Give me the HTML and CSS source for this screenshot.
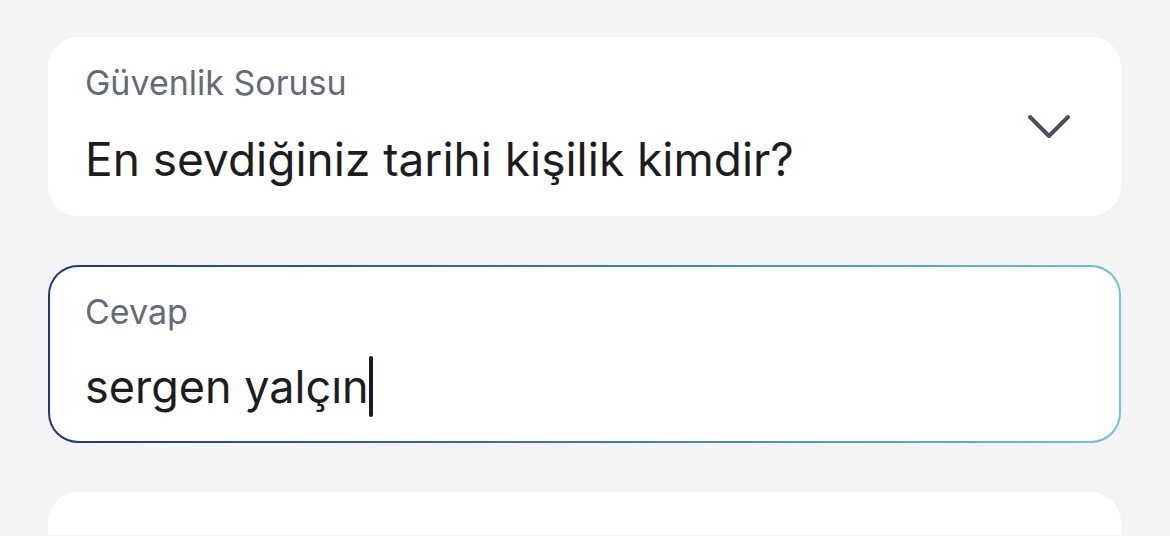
FILE: index.html
```html
<!DOCTYPE html>
<html lang="tr">
<head>
<meta charset="utf-8">
<title>Güvenlik Sorusu</title>
<link rel="stylesheet" href="styles.css">
</head>
<body>
<main class="form">
  <div class="field select">
    <div class="field-body">
      <div class="label">Güvenlik Sorusu</div>
      <div class="value question">En sevdiğiniz tarihi kişilik kimdir?</div>
    </div>
    <svg class="chevron" width="44" height="26" viewBox="0 0 44 26" aria-hidden="true">
      <polyline points="3,3 22,22 41,3" fill="none" stroke="#4b505c" stroke-width="4" stroke-linecap="round" stroke-linejoin="round"/>
    </svg>
  </div>
  <div class="field input focused">
    <div class="field-body">
      <div class="label">Cevap</div>
      <div class="value answer"><span>sergen yalçın</span><span class="caret"></span></div>
    </div>
  </div>
  <div class="field next"></div>
</main>
</body>
</html>
```
FILE: styles.css
```css
html, body {
  margin: 0;
  padding: 0;
  background: #f4f4f7;
  height: 536px;
  overflow: hidden;
}
body {
  font-family: Inter, "Noto Sans", "Liberation Sans", sans-serif;
  color: #1d1d21;
}
.form {
  display: flex;
  flex-direction: column;
  gap: 49px;
  padding: 37px 49px 0 48px;
}
.field {
  background: #ffffff;
  border-radius: 30px;
  box-sizing: border-box;
  display: flex;
  align-items: center;
}
.select {
  height: 179px;
  padding: 0 50px 0 37px;
}
.field-body {
  flex: 1;
  display: flex;
  flex-direction: column;
  align-self: flex-start;
}
.select .field-body {
  padding-top: 25px;
}
.label {
  font-size: 34px;
  line-height: 41px;
  color: #646a76;
}
.question {
  margin-top: 28px;
  font-size: 46px;
  line-height: 56px;
}
.chevron {
  flex: none;
}
.input {
  height: 178px;
  border: 2px solid transparent;
  background:
    linear-gradient(#fff, #fff) padding-box,
    linear-gradient(90deg, #1d3a7a 0%, #3f6f9c 45%, #70c3d3 100%) border-box;
  padding: 0 35px;
}
.input .field-body {
  padding-top: 24px;
}
.answer {
  margin-top: 24px;
  font-size: 45px;
  line-height: 56px;
  display: flex;
  align-items: center;
}
.caret {
  display: inline-block;
  width: 4px;
  height: 61px;
  margin-left: 0;
  border-radius: 2px;
  background: #1a1a26;
}
.next {
  height: 43px;
  border-radius: 30px 30px 0 0;
}
```
